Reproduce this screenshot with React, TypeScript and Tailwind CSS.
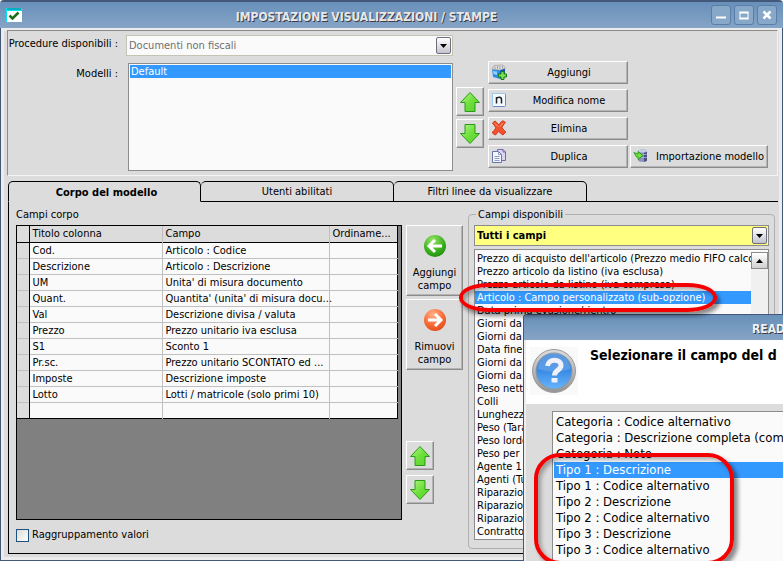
import type { ReactNode } from 'react';

const rows = [
  ['Cod.', 'Articolo : Codice'],
  ['Descrizione', 'Articolo : Descrizione'],
  ['UM', "Unita' di misura documento"],
  ['Quant.', "Quantita' (unita' di misura docu..."],
  ['Val', 'Descrizione divisa / valuta'],
  ['Prezzo', 'Prezzo unitario iva esclusa'],
  ['S1', 'Sconto 1'],
  ['Pr.sc.', 'Prezzo unitario SCONTATO ed ...'],
  ['Imposte', 'Descrizione imposte'],
  ['Lotto', 'Lotti / matricole (solo primi 10)'],
  ['', ''],
];

const fields = [
  "Prezzo di acquisto dell'articolo (Prezzo medio FIFO calcola",
  'Prezzo articolo da listino (iva esclusa)',
  'Prezzo articolo da listino (iva compresa)',
  'Articolo : Campo personalizzato (sub-opzione)',
  'Data prima evasione/rientro',
  'Giorni da',
  'Giorni da',
  'Data fine',
  'Giorni da',
  'Giorni da',
  'Peso netto',
  'Colli',
  'Lunghezza',
  'Peso (Tara)',
  'Peso lordo',
  'Peso per',
  'Agente 1',
  'Agenti (Tutti)',
  'Riparazione',
  'Riparazione',
  'Riparazione',
  'Contratto',
];

const options = [
  'Categoria : Codice alternativo',
  'Categoria : Descrizione completa (comp',
  'Categoria : Note',
  'Tipo 1 : Descrizione',
  'Tipo 1 : Codice alternativo',
  'Tipo 2 : Descrizione',
  'Tipo 2 : Codice alternativo',
  'Tipo 3 : Descrizione',
  'Tipo 3 : Codice alternativo',
];

const raised =
  'border border-t-white border-l-white border-r-[#8c8c8c] border-b-[#8c8c8c] shadow-[inset_-1px_-1px_0_#b4b4b4] bg-[#dcdcdc]';

function GreenArrow({ down = false }: { down?: boolean }) {
  return (
    <svg viewBox="0 0 22 22" className="size-[22px]">
      <defs>
        <linearGradient id="leaf" x1="0" y1="0" x2="1" y2="1">
          <stop offset="0" stopColor="#b5f78a" />
          <stop offset="0.5" stopColor="#6fe03c" />
          <stop offset="1" stopColor="#58cf28" />
        </linearGradient>
      </defs>
      <path
        d={down ? 'M11 20.5 20.5 10.5H16V1.5H6V10.5H1.5Z' : 'M11 1.5 20.5 11.5H16V20.5H6V11.5H1.5Z'}
        fill="url(#leaf)"
        stroke="#2a9a1a"
        strokeLinejoin="round"
      />
    </svg>
  );
}

function MoveButton({ label, down }: { label: string; down?: boolean }) {
  return (
    <button type="button" aria-label={label} className={`flex h-[29px] w-7 items-center justify-center ${raised}`}>
      <GreenArrow down={down} />
    </button>
  );
}

function RoundArrow({ right = false }: { right?: boolean }) {
  return (
    <svg viewBox="0 0 24 24" className="size-6">
      <defs>
        <radialGradient id="ballGreen" cx="0.4" cy="0.25" r="0.8">
          <stop offset="0" stopColor="#9be36a" />
          <stop offset="0.6" stopColor="#3fb321" />
          <stop offset="1" stopColor="#1f8a10" />
        </radialGradient>
        <radialGradient id="ballOrange" cx="0.4" cy="0.25" r="0.8">
          <stop offset="0" stopColor="#ffb08a" />
          <stop offset="0.6" stopColor="#f96a35" />
          <stop offset="1" stopColor="#dd4a18" />
        </radialGradient>
      </defs>
      <circle cx="12" cy="12" r="11" fill={right ? 'url(#ballOrange)' : 'url(#ballGreen)'} />
      <path
        d={right ? 'M5 12H18M12 6l6 6-6 6' : 'M19 12H6M12 6l-6 6 6 6'}
        fill="none"
        stroke="#fff"
        strokeWidth="3"
      />
    </svg>
  );
}

function AddIcon() {
  return (
    <svg viewBox="0 0 16 16" className="size-4">
      <path d="M1 5 9 6V15L2 13Z" fill="#2f8fe8" />
      <path d="M9 6 14 4V12L9 15Z" fill="#1259b8" />
      <path d="M2 7 6 7.5V11L2.5 10Z" fill="#8fd0ff" />
      <path d="M1 5 3 1.5 12 1 14.5 4 9 6Z" fill="#e2e2e2" stroke="#a0a0a0" strokeWidth="0.7" />
      <path d="M4 2.5V5M6.5 2V5M9 2V5M11.5 2V4" stroke="#9a9a9a" />
      <path d="M10 7.5h3v2.5h2.5v3H13v2.5h-3V13H7.5v-3H10Z" fill="#7be04a" stroke="#147a12" />
    </svg>
  );
}

function RenameIcon() {
  return (
    <svg viewBox="0 0 16 16" className="size-4">
      <rect x="1.5" y="1.5" width="13" height="13" rx="1" fill="#f4faff" stroke="#7089c4" />
      <path d="M1.5 14V1.5H14" fill="none" stroke="#9cc8ee" />
      <path d="M5.5 11.5V5M5.5 6.5C6.5 5 10.5 4.5 10.5 7.5V11.5" fill="none" stroke="#222" strokeWidth="1.5" />
    </svg>
  );
}

function DeleteIcon() {
  return (
    <svg viewBox="0 0 16 16" className="size-4">
      <path
        d="M1.5 3 4 1C6 2 6.5 4 8 5 9 3 10 1.5 12 .8L14.5 2.5C13 4 11.5 6 11 7.5 12 9.5 13.5 10.5 14.8 12L12 15C10 14 8.5 12.5 7.5 11 6.5 13 5.5 14.5 4 15L1 12.5C2.5 11.5 4 9.5 4.8 7.8 4 6 2.5 4.5 1.5 3Z"
        fill="#f4502c"
        stroke="#d23a1e"
        strokeLinejoin="round"
      />
      <path d="M3.5 3 7 6.5M12 3 9 6.5" stroke="#ff9a7a" />
    </svg>
  );
}

function CopyIcon() {
  return (
    <svg viewBox="0 0 16 16" className="size-4">
      <path d="M6.5 1.5H12L14.5 4V12.5H6.5Z" fill="#ddd6f0" stroke="#7668ac" />
      <path d="M12 1.5V4H14.5" fill="none" stroke="#7668ac" />
      <path d="M1.5 3.5H7.5L10.5 6.5V14.5H1.5Z" fill="#f3f6ff" stroke="#6476a8" />
      <path d="M7.5 3.5V6.5H10.5M3.5 8.5H8.5M3.5 10.5H8.5M3.5 12.5H8.5" fill="none" stroke="#8c9cc6" />
    </svg>
  );
}

function ImportIcon() {
  return (
    <svg viewBox="0 0 16 16" className="size-4">
      <path d="M5 3C5 1 14 1 14 3V12C14 14.5 5 14.5 5 12Z" fill="#8d93bd" />
      <path d="M11 3H14V12C14 13 12.5 13.5 11 13.7Z" fill="#4b4f86" />
      <ellipse cx="9.5" cy="3" rx="4.5" ry="1.5" fill="#c9cde6" />
      <path d="M5 6.5H14M5 9.5H14" stroke="#b5badb" strokeWidth="0.7" />
      <path d="M1 4.5 5 6V3.5L10 7.5 5 11.5V9H3.5Z" fill="#6fe03c" stroke="#1d8a1a" strokeWidth="0.8" />
    </svg>
  );
}

function HelpIcon() {
  return (
    <svg viewBox="0 0 48 48" className="size-12 shrink-0 bg-[#f9f9f9]">
      <defs>
        <linearGradient id="ring" x1="0" y1="0" x2="0" y2="1">
          <stop offset="0" stopColor="#dcdcdc" />
          <stop offset="1" stopColor="#949494" />
        </linearGradient>
        <linearGradient id="disc" x1="0" y1="0" x2="0" y2="1">
          <stop offset="0" stopColor="#3f87d8" />
          <stop offset="0.5" stopColor="#3b8be4" />
          <stop offset="1" stopColor="#64b4ff" />
        </linearGradient>
      </defs>
      <circle cx="24" cy="24" r="21.5" fill="url(#ring)" stroke="#9a9a9a" />
      <circle cx="24" cy="24" r="18.5" fill="#8d98a4" />
      <circle cx="24" cy="24" r="17.5" fill="url(#disc)" />
      <path d="M8 22A16 16 0 0 1 40 22Q24 28 8 22Z" fill="#fff" opacity="0.15" />
      <path d="M17.5 19C18 11.5 31 11.5 31 18.5C31 23 24.5 23 24.5 28.5" fill="none" stroke="#f0f0fa" strokeWidth="5" />
      <rect x="21.5" y="31" width="6" height="4.5" fill="#f0f0fa" />
    </svg>
  );
}

function DropArrow({ up = false }: { up?: boolean }) {
  return (
    <svg viewBox="0 0 7 4" className="h-1 w-[7px]">
      <path d={up ? 'M0 4H7L3.5 0Z' : 'M0 0H7L3.5 4Z'} fill="#000" />
    </svg>
  );
}

function Combo({ id, value, className }: { id: string; value: string; className: string }) {
  return (
    <div className="relative">
      <select id={id} aria-label={value} className={`block h-[21px] w-full appearance-none border outline-none ${className}`}>
        <option>{value}</option>
      </select>
      <span className="pointer-events-none absolute top-0.5 right-0.5 flex h-[17px] w-[15px] items-center justify-center rounded-[2px] border border-[#70707c] bg-linear-to-b from-white to-[#c4c4d0]">
        <DropArrow />
      </span>
    </div>
  );
}

function ActionButton({ icon, children }: { icon: ReactNode; children: ReactNode }) {
  return (
    <button type="button" className={`flex h-[23px] w-full items-center pl-0.5 ${raised}`}>
      <span className="pb-0.5">{icon}</span>
      <span className="flex-1 pl-1 whitespace-nowrap">{children}</span>
    </button>
  );
}

function FieldButton({ icon, children }: { icon: ReactNode; children: ReactNode }) {
  return (
    <button type="button" className={`flex h-[71px] w-[57px] flex-col items-center justify-end pb-[3px] ${raised}`}>
      {icon}
      <span className="mt-2 leading-[13px]">{children}</span>
    </button>
  );
}

function WindowButton({ label, children }: { label: string; children: ReactNode }) {
  return (
    <button
      type="button"
      aria-label={label}
      className="flex size-5 items-center justify-center rounded-[3px] border border-[#5a7ea8] bg-[#88a8ca]"
    >
      <svg viewBox="0 0 10 10" className="size-2.5" fill="none" stroke="#fff" strokeWidth="2">
        {children}
      </svg>
    </button>
  );
}

function Tab({ active = false, children }: { active?: boolean; children: ReactNode }) {
  return (
    <button
      type="button"
      role="tab"
      aria-selected={active}
      className={`h-[21px] w-[193px] rounded-t-[5px] border border-black ${
        active ? 'border-b-transparent pt-0.5 pl-1 font-bold' : 'border-l-0'
      }`}
    >
      {children}
    </button>
  );
}

function TitleBar() {
  return (
    <header className="flex h-7 items-center border-t-2 border-[#43597a] bg-linear-to-b from-[#6890ba] to-[#86a4c6] pr-1.5 pl-1.5">
      <svg viewBox="0 0 16 14" className="h-3.5 w-4">
        <path d="M0 0H16V14H0Z" fill="#fff" />
        <path d="M0 0H16V3H1V14H0Z" fill="#00e5f0" />
        <path d="M1 1H15" stroke="#087a90" />
        <path d="M3.5 7.5 6.5 10.5 12.5 4.5" fill="none" stroke="#1f6e1a" strokeWidth="2.5" />
      </svg>
      <h1 className="flex-1 pt-1 text-center text-[12px] font-bold text-[#e8e8e8] [text-shadow:1px_1px_0_#3c3c46]">
        IMPOSTAZIONE VISUALIZZAZIONI / STAMPE
      </h1>
      <div className="flex gap-[3px]">
        <WindowButton label="Riduci">
          <path d="M0 7.5H10" />
        </WindowButton>
        <WindowButton label="Ingrandisci">
          <path d="M.5 2.5H9.5M.5 8.5H9.5" />
          <path d="M1 2V9M9 2V9" strokeWidth="1" />
        </WindowButton>
        <WindowButton label="Chiudi">
          <path d="M1.5 1.5 8.5 8.5M8.5 1.5 1.5 8.5" strokeWidth="2.5" />
        </WindowButton>
      </div>
    </header>
  );
}

function ModelPanel() {
  return (
    <section className="flex border border-t-[#8c8c8c] border-r-[#f4f4f4] border-b-[#f4f4f4] border-l-[#8c8c8c] pt-1 pr-[9px] pb-1">
      <div className="w-[118px] shrink-0 pr-2 text-right">
        <label htmlFor="procedure" className="block pt-0.5 whitespace-nowrap">
          Procedure disponibili :
        </label>
        <p id="modelli" className="pt-4">
          Modelli :
        </p>
      </div>
      <div className="min-w-0 flex-1">
        <Combo id="procedure" value="Documenti non fiscali" className="border-[#c4c4b4] bg-[#fafafa] pl-0.5 text-[#707070]" />
        <ul
          role="listbox"
          aria-labelledby="modelli"
          className="mt-[7px] ml-0.5 h-[108px] border border-[#8c8c8c] bg-[#fafafa] p-px"
        >
          <li role="option" aria-selected="true" className="bg-[#3399ff] pl-px leading-[13px] text-white">
            Default
          </li>
        </ul>
      </div>
      <div className="ml-[3px] flex flex-col gap-[3px] pt-[52px]">
        <MoveButton label="Sposta su" />
        <MoveButton label="Sposta giu" down />
      </div>
      <div className="ml-1 flex w-[140px] flex-col gap-[5px] pt-[26px]">
        <ActionButton icon={<AddIcon />}>Aggiungi</ActionButton>
        <ActionButton icon={<RenameIcon />}>Modifica nome</ActionButton>
        <ActionButton icon={<DeleteIcon />}>Elimina</ActionButton>
        <ActionButton icon={<CopyIcon />}>Duplica</ActionButton>
      </div>
      <div className="ml-0.5 w-[138px] self-end pb-[3px]">
        <ActionButton icon={<ImportIcon />}>Importazione modello</ActionButton>
      </div>
    </section>
  );
}

function BodyTable() {
  return (
    <div className="h-[295px] border border-black bg-[#808080] pr-[3px]">
      <table className="w-full table-fixed border-collapse bg-[#fafafa]">
        <colgroup>
          <col className="w-3" />
          <col className="w-[133px]" />
          <col className="w-[167px]" />
          <col />
        </colgroup>
        <thead>
          <tr className="h-4 border-r border-b border-black bg-[#dcdcdc] text-left">
            <th className="border-r border-black p-0" />
            <th className="border-r border-[#c0c0c0] p-0 pl-[3px] leading-[15px] font-normal">Titolo colonna</th>
            <th className="border-r border-[#c0c0c0] p-0 pl-[3px] leading-[15px] font-normal">Campo</th>
            <th className="p-0 pl-[3px] leading-[15px] font-normal">Ordiname...</th>
          </tr>
        </thead>
        <tbody className="border-r border-b border-black">
          {rows.map(([title, field], i) => (
            <tr key={i} className="h-4 border-b border-[#c0c0c0] last:border-black">
              <td className="border-r border-r-black bg-[#dcdcdc] p-0" />
              <td className="border-r border-[#c0c0c0] p-0 pl-[3px] leading-[15px] whitespace-nowrap">{title}</td>
              <td className="border-r border-[#c0c0c0] p-0 pl-[3px] leading-[15px] whitespace-nowrap">{field}</td>
              <td className="p-0" />
            </tr>
          ))}
        </tbody>
      </table>
    </div>
  );
}

function FieldList() {
  return (
    <fieldset className="h-[341px] w-full min-w-0 rounded-[4px] border border-[#b0b0b0] px-[5px]">
      <legend className="ml-0.5 px-0.5 leading-[13px]">Campi disponibili</legend>
      <div className="pt-1">
        <Combo id="campi" value="Tutti i campi" className="border-[#8c8c8c] bg-[#ffff80] pl-0.5 font-bold" />
      </div>
      <div className="mt-[3px] flex border border-[#8c8c8c] bg-[#fafafa] pt-0.5 pb-px">
        <ul role="listbox" aria-label="Campi disponibili" className="min-w-0 flex-1 overflow-hidden leading-[13px]">
          {fields.map((field, i) => (
            <li
              key={i}
              role="option"
              aria-selected={i === 3}
              className="pl-0.5 whitespace-nowrap aria-selected:bg-[#3399ff] aria-selected:text-white"
            >
              {field}
            </li>
          ))}
        </ul>
        <div className="w-[17px] bg-[#f0f0f0]">
          <button
            type="button"
            aria-label="Scorri su"
            className="flex h-[17px] w-full items-center justify-center border border-[#8c8c8c] bg-linear-to-b from-white to-[#d0d0d0]"
          >
            <DropArrow up />
          </button>
        </div>
      </div>
    </fieldset>
  );
}

function FieldDialog() {
  return (
    <div
      role="dialog"
      aria-labelledby="dialog-title"
      className="absolute top-[314px] right-0 bottom-0 left-[523px] flex flex-col overflow-hidden rounded-tl-[4px] border-t border-l border-[#43597a] bg-[#dcdcdc]"
    >
      <div className="h-[25px] shrink-0 overflow-hidden bg-linear-to-b from-[#6890ba] to-[#86a4c6] pl-[228px] text-[12px] leading-[28px] font-bold whitespace-nowrap text-[#f0f0f0] [text-shadow:1px_1px_0_#3c3c46]">
        READ
      </div>
      <div className="flex flex-1 flex-col border-l-2 border-[#ececec]">
        <div className="flex h-16 shrink-0 gap-3 overflow-hidden bg-white pt-[7px] pl-1">
          <HelpIcon />
          <h2 id="dialog-title" className="text-[14px] leading-[17px] font-bold whitespace-nowrap">
            Selezionare il campo del d
          </h2>
        </div>
        <ul
          role="listbox"
          aria-labelledby="dialog-title"
          className="mt-[7px] ml-[26px] flex-1 border-t border-l border-[#8c8c8c] bg-[#fafafa] pt-0.5 pl-px text-[13px] leading-4"
        >
          {options.map((option, i) => (
            <li
              key={option}
              role="option"
              aria-selected={i === 3}
              className="pl-0.5 whitespace-nowrap aria-selected:bg-[#3399ff] aria-selected:text-white"
            >
              {option}
            </li>
          ))}
        </ul>
      </div>
    </div>
  );
}

export default function App() {
  return (
    <div className="relative flex min-h-screen flex-col overflow-hidden rounded-t-[4px] bg-[#dcdcdc] font-['DejaVu_Sans_Condensed','DejaVu_Sans',sans-serif] text-[11px] leading-[14px] text-black">
      <TitleBar />
      <main className="flex flex-1 flex-col border-x border-b border-[#43597a] bg-[#dcdcdc] px-[3px] pt-0.5 pb-0.5 shadow-[inset_0_0_0_3px_#ececec]">
        <div className="mx-[3px] mr-px">
          <ModelPanel />
          <div role="tablist" className="mt-[5px] ml-px flex">
            <Tab active>Corpo del modello</Tab>
            <Tab>Utenti abilitati</Tab>
            <Tab>Filtri linee da visualizzare</Tab>
            <div className="flex-1 border-b border-black" />
          </div>
          <section className="ml-px flex border-b border-l border-black pr-[3px] pb-1">
            <div className="min-w-0 flex-1 pt-1.5 pl-[7px]">
              <h2 className="pb-[3px]">Campi corpo</h2>
              <BodyTable />
              <label className="mt-2 flex items-center gap-[3px]">
                <input
                  type="checkbox"
                  className="size-[13px] appearance-none border border-[#1c5180] bg-linear-to-br from-[#dcdcd7] to-white"
                />
                Raggruppamento valori
              </label>
            </div>
            <div className="ml-1 pt-[23px]">
              <div className="flex flex-col gap-[3px]">
                <FieldButton icon={<RoundArrow />}>Aggiungi campo</FieldButton>
                <FieldButton icon={<RoundArrow right />}>Rimuovi campo</FieldButton>
              </div>
              <div className="mt-[71px] flex flex-col gap-[5px]">
                <MoveButton label="Sposta campo su" />
                <MoveButton label="Sposta campo giu" down />
              </div>
            </div>
            <div className="ml-[5px] w-[307px] shrink-0 pt-1.5">
              <FieldList />
            </div>
          </section>
        </div>
      </main>
      <FieldDialog />
      <div className="pointer-events-none absolute top-[283px] left-[459px] h-[29px] w-[258px] rounded-[30px/14px] border-4 border-[#f40000] shadow-[3px_4px_4px_rgba(0,0,0,0.45),inset_3px_3px_4px_rgba(0,0,0,0.3)]" />
      <div className="pointer-events-none absolute top-[453px] left-[534px] h-[112px] w-[200px] rounded-[26px] border-4 border-[#f40000] shadow-[4px_4px_4px_rgba(0,0,0,0.45),inset_3px_3px_4px_rgba(0,0,0,0.3)]" />
    </div>
  );
}
